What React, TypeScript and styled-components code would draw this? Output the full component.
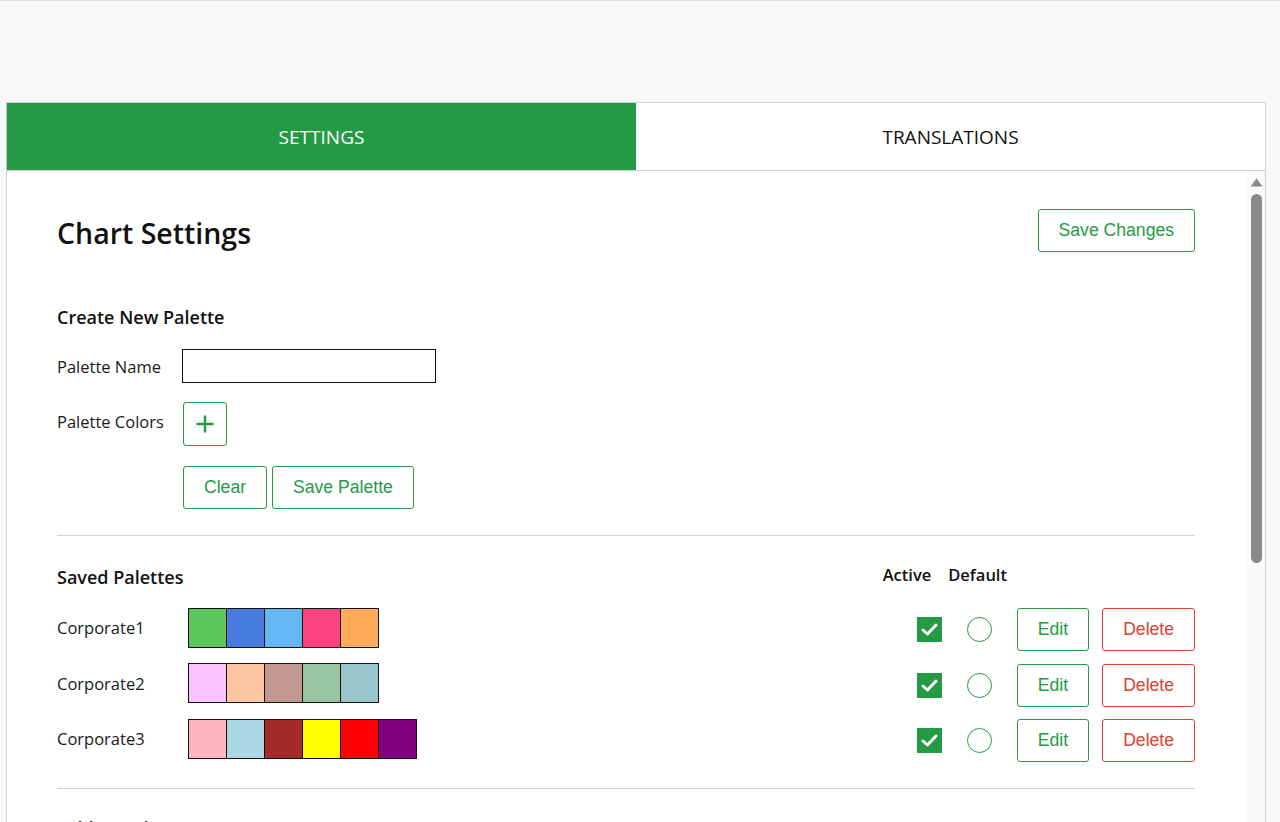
import React from "react";
import styled, { createGlobalStyle } from "styled-components";

const GREEN = "#259a45";
const RED = "#d9432f";

const GlobalStyle = createGlobalStyle`
  html, body {
    margin: 0;
    padding: 0;
    height: 100%;
    overflow: hidden;
    background: #f7f8fa;
  }
  body {
    border-top: 1px solid #dde1da;
    font-family: "Open Sans", "Noto Sans", sans-serif;
    color: #111;
  }
`;

const Page = styled.div`
  padding: 101px 14px 0 6px;
`;

const Panel = styled.div`
  background: #fff;
  border: 1px solid #cfcfcf;
  border-bottom: none;
`;

const TabBar = styled.div`
  display: grid;
  grid-template-columns: 1fr 1fr;
  height: 67px;
  border-bottom: 1px solid #cfcfcf;
`;

const Tab = styled.div<{ active?: boolean }>`
  display: flex;
  align-items: center;
  justify-content: center;
  font-size: 19px;
  text-transform: uppercase;
  background: ${p => (p.active ? GREEN : "#fff")};
  color: ${p => (p.active ? "#fff" : "#111")};
  cursor: pointer;
`;

const ScrollArea = styled.div`
  display: flex;
  height: 680px;
  overflow: hidden;
`;

const ScrollRail = styled.div`
  width: 18px;
  flex-shrink: 0;
  background: #fafafa;
  display: flex;
  flex-direction: column;
  align-items: center;
  padding-top: 6px;
`;

const ScrollThumb = styled.div`
  width: 11px;
  height: 369px;
  margin-top: 7px;
  margin-left: 1px;
  border-radius: 6px;
  background: #8a8a8a;
`;

const Content = styled.div`
  flex: 1;
  min-width: 0;
  box-sizing: border-box;
  padding: 38px 52px 0 50px;
`;

const HeaderRow = styled.div`
  display: flex;
  align-items: center;
  justify-content: space-between;
`;

const Title = styled.h1`
  margin: 0;
  font-size: 28.5px;
  font-weight: 600;
  line-height: 42px;
  position: relative;
  top: 2px;
`;

const SectionTitle = styled.h2`
  margin: 0;
  font-size: 18px;
  font-weight: 600;
  line-height: 26px;
`;

const Button = styled.button<{ tone?: "green" | "red" }>`
  font-family: "Liberation Sans", Arial, sans-serif;
  font-size: 17.6px;
  line-height: 21px;
  padding: 10px 20px;
  background: #fff;
  color: ${p => (p.tone === "red" ? RED : GREEN)};
  border: 1px solid ${p => (p.tone === "red" ? RED : GREEN)};
  border-radius: 3px;
  cursor: pointer;
`;

const IconButton = styled(Button)`
  width: 44px;
  height: 44px;
  padding: 0;
  display: flex;
  align-items: center;
  justify-content: center;
  margin-left: 1px;
`;

const CreateSection = styled.section`
  margin-top: 52px;
  display: flex;
  flex-direction: column;
  gap: 19px;
`;

const FormRow = styled.div`
  display: flex;
  align-items: center;
`;

const FieldLabel = styled.label`
  width: 125px;
  font-size: 16.5px;
  color: #1a1a1a;
`;

const TopLabel = styled(FieldLabel)`
  position: relative;
  top: -3px;
`;

const TextInput = styled.input`
  width: 254px;
  height: 34px;
  box-sizing: border-box;
  border: 1px solid #111;
  border-radius: 0;
  padding: 0 6px;
  font-size: 16px;
  outline: none;
`;

const ActionRow = styled.div`
  display: flex;
  gap: 5px;
  margin-left: 126px;
  margin-top: 1px;
`;

const Divider = styled.hr<{ space: number }>`
  border: none;
  border-top: 1px solid #d2d2d2;
  margin: ${p => p.space}px 0 0;
`;

const SavedSection = styled.section`
  margin-top: 28px;
`;

const SavedHeader = styled.div`
  display: flex;
  align-items: center;
  justify-content: space-between;
`;

const ColumnHeads = styled.div`
  display: flex;
  gap: 17px;
  margin-right: 188px;
  font-size: 16.5px;
  font-weight: 600;
  position: relative;
  top: -3px;
`;

const PaletteList = styled.div`
  margin-top: 18px;
  display: flex;
  flex-direction: column;
  gap: 12.5px;
`;

const PaletteRow = styled.div`
  display: flex;
  align-items: center;
  height: 43px;
`;

const PaletteName = styled.div`
  width: 131px;
  font-size: 16.5px;
  color: #1a1a1a;
  position: relative;
  top: -2px;
`;

const Swatches = styled.div`
  display: flex;
  flex: 1;
  position: relative;
  top: -2px;
`;

const Swatch = styled.div<{ color: string }>`
  width: 39px;
  height: 40px;
  box-sizing: border-box;
  border: 1.5px solid #111;
  background: ${p => p.color};
  & + & {
    margin-left: -1px;
  }
`;

const RowControls = styled.div`
  display: flex;
  align-items: center;
`;

const Checkbox = styled.span`
  width: 25px;
  height: 25px;
  background: ${GREEN};
  display: flex;
  align-items: center;
  justify-content: center;
  margin-right: 25px;
`;

const Radio = styled.span`
  width: 25px;
  height: 25px;
  box-sizing: border-box;
  border-radius: 50%;
  border: 1.5px solid ${GREEN};
  margin-right: 25px;
`;

const EditButton = styled(Button)`
  margin-right: 13px;
`;

const TableSection = styled.section`
  margin-top: 26px;
`;

const palettes = [
  { name: "Corporate1", colors: ["#5bc85b", "#477bde", "#63b7f2", "#fd4481", "#ffaa59"] },
  { name: "Corporate2", colors: ["#f9c4fe", "#fdc5a2", "#c2978d", "#97c59f", "#9ac4cb"] },
  { name: "Corporate3", colors: ["#feb7c1", "#acd8e5", "#a52a2a", "#ffff00", "#ff0000", "#800080"] }
];

const PlusIcon = () => (
  <svg width="20" height="20" viewBox="0 0 20 20">
    <path d="M10 1.5v17M1.5 10h17" stroke={GREEN} strokeWidth="2.4" fill="none" />
  </svg>
);

const CheckIcon = () => (
  <svg width="21" height="21" viewBox="0 0 21 21">
    <polyline points="4,11 8.5,15 17,6" stroke="#fff" strokeWidth="3" fill="none" strokeLinecap="round" strokeLinejoin="round" />
  </svg>
);

const ArrowUp = () => (
  <svg width="13" height="10" viewBox="0 0 13 10">
    <polygon points="0.5,9.5 12.5,9.5 6.5,1.5" fill="#8a8a8a" />
  </svg>
);

export default function App() {
  return (
    <>
      <GlobalStyle />
      <Page>
        <Panel>
          <TabBar>
            <Tab active>Settings</Tab>
            <Tab>Translations</Tab>
          </TabBar>
          <ScrollArea>
            <Content>
              <HeaderRow>
                <Title>Chart Settings</Title>
                <Button>Save Changes</Button>
              </HeaderRow>

              <CreateSection>
                <SectionTitle>Create New Palette</SectionTitle>
                <FormRow>
                  <FieldLabel>Palette Name</FieldLabel>
                  <TextInput type="text" />
                </FormRow>
                <FormRow>
                  <TopLabel>Palette Colors</TopLabel>
                  <IconButton aria-label="Add color">
                    <PlusIcon />
                  </IconButton>
                </FormRow>
                <ActionRow>
                  <Button>Clear</Button>
                  <Button>Save Palette</Button>
                </ActionRow>
              </CreateSection>

              <Divider space={26} />

              <SavedSection>
                <SavedHeader>
                  <SectionTitle>Saved Palettes</SectionTitle>
                  <ColumnHeads>
                    <span>Active</span>
                    <span>Default</span>
                  </ColumnHeads>
                </SavedHeader>
                <PaletteList>
                  {palettes.map(p => (
                    <PaletteRow key={p.name}>
                      <PaletteName>{p.name}</PaletteName>
                      <Swatches>
                        {p.colors.map((c, i) => (
                          <Swatch key={i} color={c} />
                        ))}
                      </Swatches>
                      <RowControls>
                        <Checkbox>
                          <CheckIcon />
                        </Checkbox>
                        <Radio />
                        <EditButton>Edit</EditButton>
                        <Button tone="red">Delete</Button>
                      </RowControls>
                    </PaletteRow>
                  ))}
                </PaletteList>
              </SavedSection>

              <Divider space={26} />

              <TableSection>
                <SectionTitle>Table Settings</SectionTitle>
              </TableSection>
            </Content>
            <ScrollRail>
              <ArrowUp />
              <ScrollThumb />
            </ScrollRail>
          </ScrollArea>
        </Panel>
      </Page>
    </>
  );
}
